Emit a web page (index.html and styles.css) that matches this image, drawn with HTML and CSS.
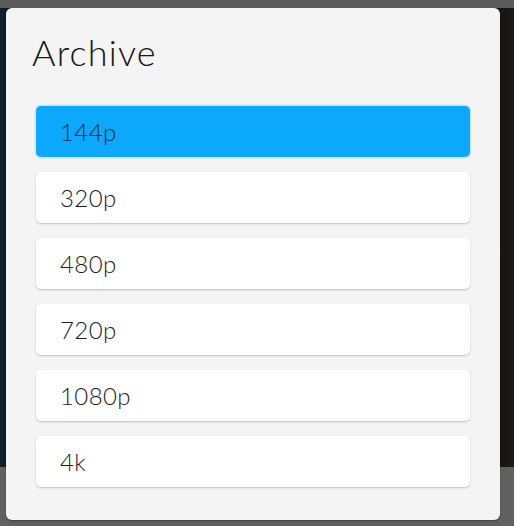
FILE: index.html
```html
<!DOCTYPE html>
<html>
<head>
<meta charset="utf-8">
<link rel="stylesheet" href="styles.css">
</head>
<body>
<div class="backdrop">
  <div class="strip-top"></div>
  <div class="video"></div>
  <div class="strip-bottom"></div>
</div>
<div class="modal">
  <h1 class="title">Archive</h1>
  <div class="options">
    <button class="option active">144p</button>
    <button class="option">320p</button>
    <button class="option">480p</button>
    <button class="option">720p</button>
    <button class="option">1080p</button>
    <button class="option">4k</button>
  </div>
</div>
</body>
</html>
```

FILE: styles.css
```css
html, body {
  margin: 0;
  padding: 0;
  width: 514px;
  height: 526px;
  overflow: hidden;
  font-family: Lato, "Open Sans", sans-serif;
}
.backdrop {
  display: flex;
  flex-direction: column;
  height: 526px;
}
.strip-top {
  height: 8px;
  background: #5b5b5b;
}
.video {
  height: 459px;
  background: linear-gradient(90deg, #0f2030 0%, #0b131c 3%, #15140f 96%, #1b1a16 100%);
}
.strip-bottom {
  flex: 1;
  background: #616161;
}
.modal {
  position: absolute;
  left: 6px;
  top: 8px;
  width: 494px;
  height: 512px;
  box-sizing: border-box;
  padding: 22px 30px 0 30px;
  background: #f4f4f4;
  border-radius: 6px;
  box-shadow: 0 1px 2px rgba(0,0,0,0.35);
}
.title {
  margin: 0 0 32px -4px;
  font-weight: 300;
  font-size: 36px;
  line-height: 44px;
  color: #151515;
  letter-spacing: 1.2px;
}
.options {
  display: flex;
  flex-direction: column;
  gap: 15px;
}
.option {
  display: flex;
  align-items: center;
  height: 51px;
  padding: 0 0 0 24px;
  border: none;
  border-radius: 5px;
  background: #fff;
  box-shadow: 0 1px 2px rgba(0,0,0,0.22);
  font-family: Lato, "Open Sans", sans-serif;
  font-size: 24px;
  font-weight: 300;
  color: #1e1e1e;
  letter-spacing: 0.4px;
  text-align: left;
}
.option.active {
  background: #0ba8fb;
  color: #12304a;
  box-shadow: 0 0 2px 1px rgba(11,168,251,0.25);
}
```
